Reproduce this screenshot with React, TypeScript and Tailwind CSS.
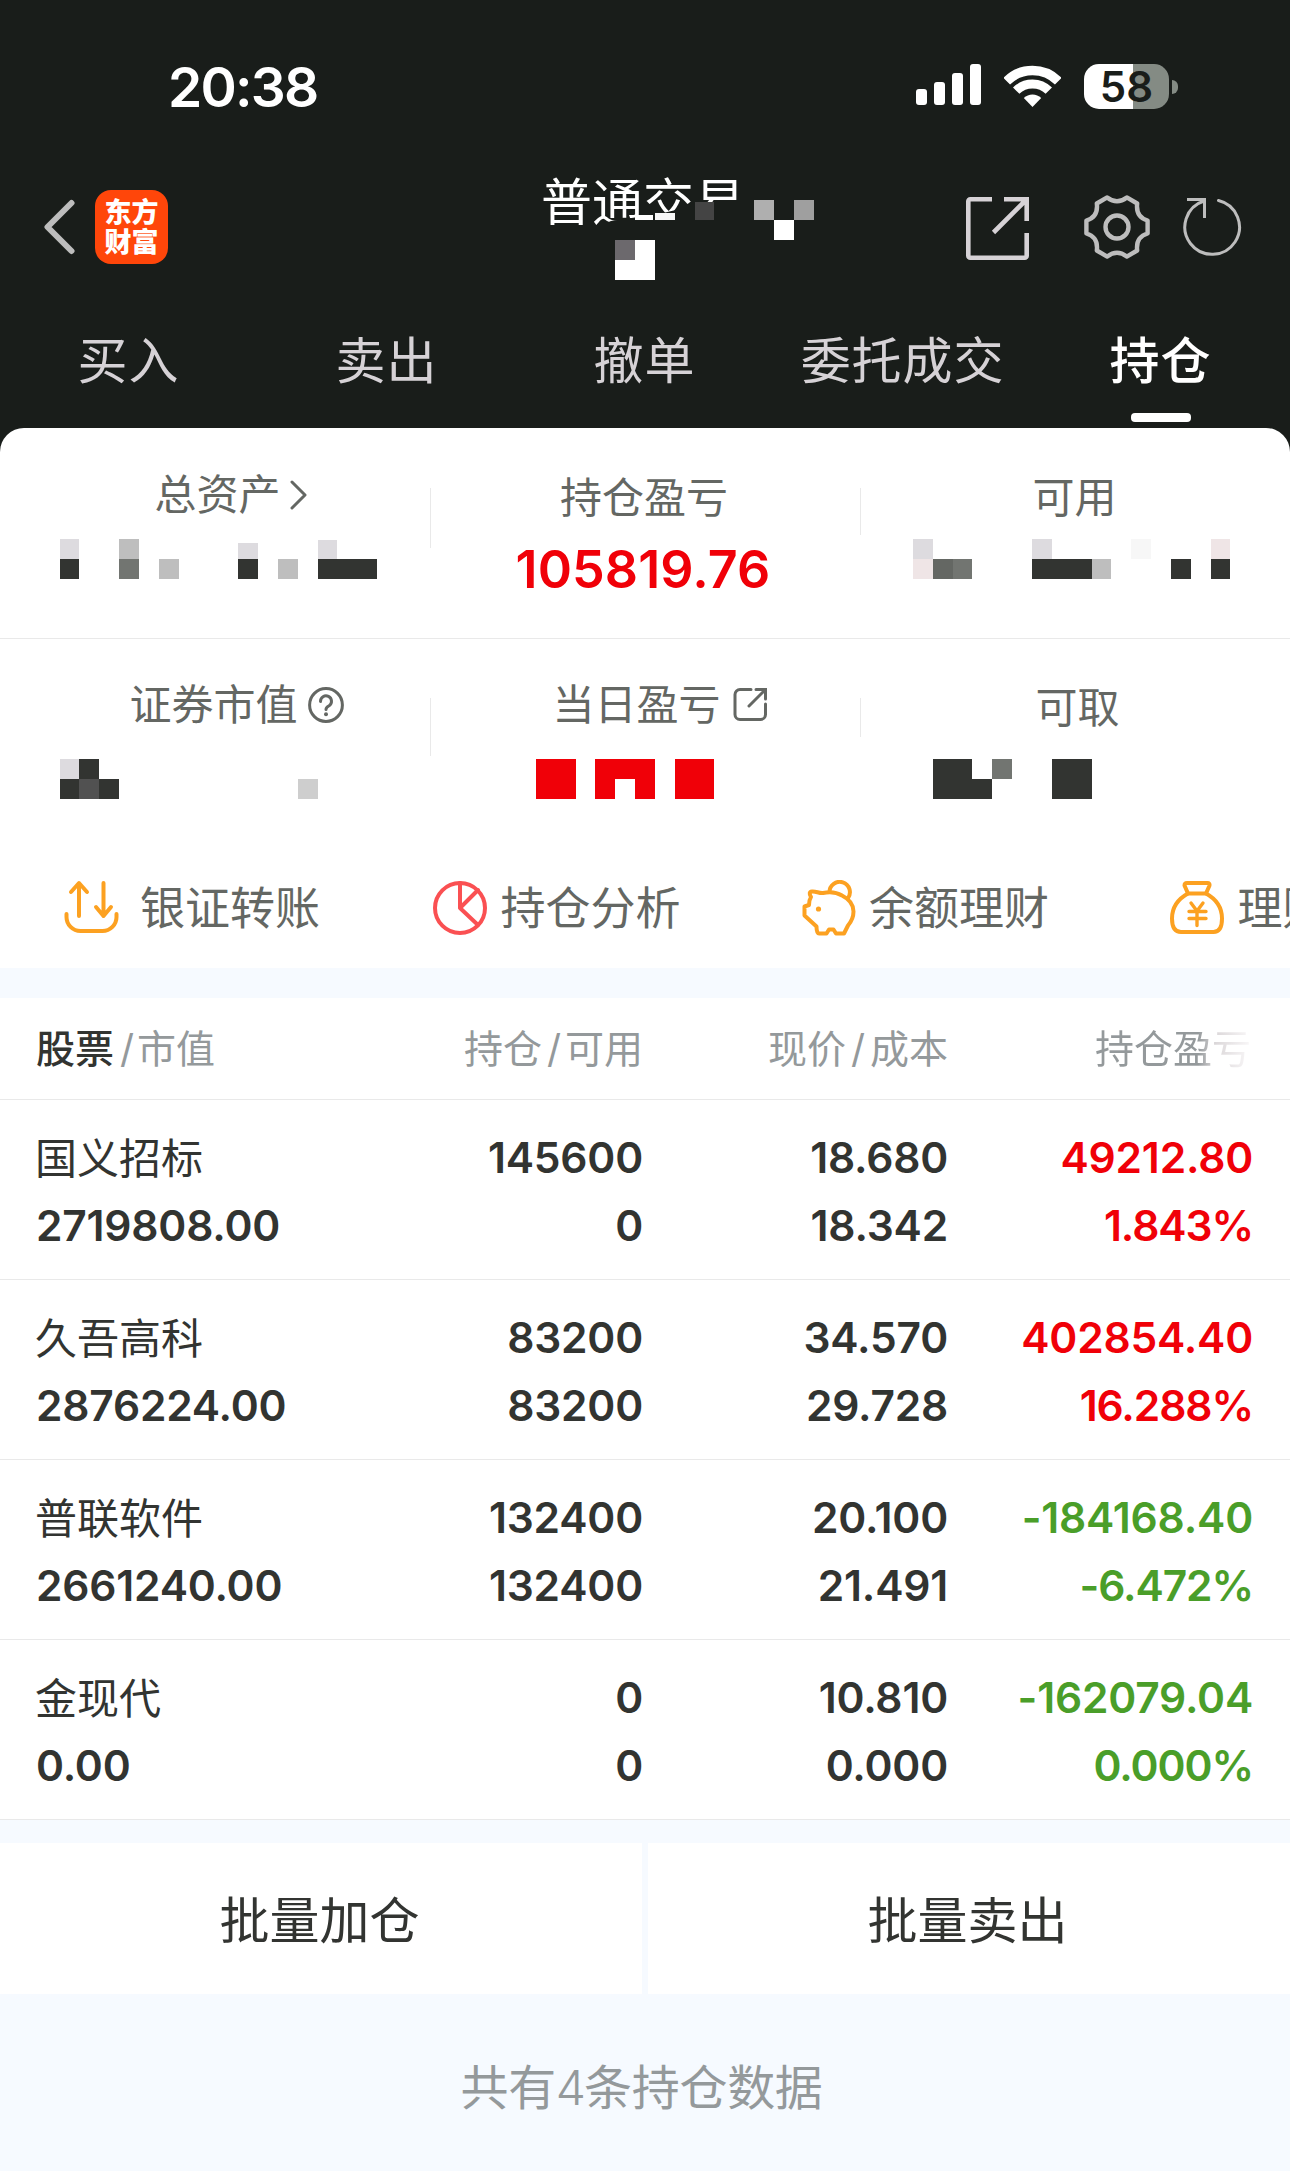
import type { ReactNode } from "react";

type Cell = [x: number, y: number, w: number, h: number, fill: string];

interface MosaicProps {
    width: number;
    height: number;
    cells: Cell[];
    className?: string;
}

function Mosaic({ width, height, cells, className }: MosaicProps) {
    return (
        <svg
            width={width}
            height={height}
            viewBox={`0 0 ${width} ${height}`}
            shapeRendering="crispEdges"
            className={className}
            aria-hidden="true"
        >
            {cells.map(([x, y, w, h, fill]) => (
                <rect key={`${x}-${y}`} x={x} y={y} width={w} height={h} fill={fill} />
            ))}
        </svg>
    );
}

const DARK = "#323431";
const PALE = "#dddbdf";
const RED = "#f00008";

const titleMask: Cell[] = [
    [117, 55, 18, 5, "#ffffff"],
    [137, 53, 20, 7, "#f7f7f7"],
    [177, 42, 19, 18, "#444444"],
    [236, 40, 20, 20, "#afafaf"],
    [276, 40, 20, 20, "#9f9f9f"],
    [256, 60, 20, 20, "#ffffff"],
    [97, 80, 20, 20, "#6c696d"],
    [117, 80, 20, 20, "#ffffff"],
    [97, 100, 40, 20, "#ffffff"],
];

const assetsMask: Cell[] = [
    [60, 0, 19, 20, PALE],
    [60, 20, 19, 20, DARK],
    [119, 0, 20, 20, "#bebebe"],
    [119, 20, 20, 20, "#727571"],
    [159, 20, 20, 20, "#bebebe"],
    [238, 4, 20, 16, PALE],
    [238, 20, 20, 20, DARK],
    [278, 20, 20, 20, "#bebebe"],
    [318, 1, 19, 19, PALE],
    [318, 20, 59, 20, DARK],
];

const availableMask: Cell[] = [
    [52, 0, 20, 20, PALE],
    [52, 20, 20, 20, "#efe5e6"],
    [72, 20, 20, 20, "#646763"],
    [92, 20, 19, 20, "#727571"],
    [171, 0, 20, 20, PALE],
    [171, 20, 60, 20, DARK],
    [231, 20, 19, 20, "#bebebe"],
    [270, 0, 20, 20, "#f7f7f7"],
    [310, 20, 20, 20, DARK],
    [350, 0, 19, 20, "#efe5e6"],
    [350, 20, 19, 20, DARK],
];

const marketMask: Cell[] = [
    [60, 0, 19, 20, PALE],
    [79, 0, 20, 20, DARK],
    [60, 20, 19, 20, DARK],
    [79, 20, 20, 20, "#515151"],
    [99, 20, 20, 20, DARK],
    [298, 20, 20, 20, "#cecece"],
];

const todayMask: Cell[] = [
    [105, 0, 40, 40, RED],
    [164, 0, 60, 20, RED],
    [164, 20, 20, 20, RED],
    [204, 20, 20, 20, RED],
    [244, 0, 39, 40, RED],
];

const withdrawMask: Cell[] = [
    [72, 0, 39, 40, DARK],
    [111, 20, 20, 20, DARK],
    [131, 0, 20, 20, "#727571"],
    [191, 0, 40, 40, DARK],
];

function StatusBar() {
    return (
        <div className="flex h-[162px] items-start pl-[168px] pt-[54px] text-white">
            <span className="w-[748px] text-[55px] leading-[66px] font-semibold tracking-[-1.8px]">
                20:38
            </span>
            <svg width="65" height="41" viewBox="0 0 65 41" fill="currentColor" className="mt-[10px]">
                <rect x="0" y="25" width="11" height="16" rx="3" />
                <rect x="18" y="18" width="11" height="23" rx="3" />
                <rect x="36" y="9" width="11" height="32" rx="3" />
                <rect x="54" y="0" width="11" height="41" rx="3" />
            </svg>
            <svg width="57" height="43" viewBox="0 0 57 43" fill="none" className="mt-[11px] ml-[23px]">
                <path d="M2.7 16.2a36.5 36.5 0 0 1 51.6 0" stroke="currentColor" strokeWidth="9.5" />
                <path d="M12.2 25.7a23 23 0 0 1 32.6 0" stroke="currentColor" strokeWidth="9" />
                <path d="M28.5 42l-8.7-8.9a12.5 12.5 0 0 1 17.4 0z" fill="currentColor" />
            </svg>
            <div className="mt-[10px] ml-[23px] flex h-[45px] w-[85px] items-center justify-center rounded-[15px] bg-[linear-gradient(90deg,#fff_49px,#848b84_49px)] text-[42px] leading-[45px] font-semibold text-[#191d1a]">
                58
            </div>
            <div className="mt-[26px] ml-[3px] h-[14px] w-[6px] rounded-r-full bg-[#848b84]" />
        </div>
    );
}

function NavBar() {
    return (
        <div className="flex h-[130px] items-start">
            <svg width="32" height="56" viewBox="0 0 32 56" fill="none" className="mt-[37px] ml-[43px]">
                <path d="M28.5 4L4.5 28l24 24" stroke="#bdbdbd" strokeWidth="6" strokeLinecap="round" strokeLinejoin="round" />
            </svg>
            <div className="mt-[28px] ml-[20px] flex h-[74px] w-[73px] flex-col items-center justify-center rounded-[16px] bg-[#ff460a] pt-[1px] text-[27px] leading-[30px] font-black text-white">
                <span>东方</span>
                <span>财富</span>
            </div>
            <div className="relative mt-[-2px] ml-[350px] h-[130px] w-[400px] pl-[23px]">
                <h1 className="pt-[8px] text-[51px] leading-[70px] font-normal text-white [clip-path:polygon(0_0,100%_0,100%_40px,168px_42px,118px_54px,70px_61px,58px_66px,58px_90px,0_90px)]">
                    普通交易
                </h1>
                <Mosaic width={320} height={122} cells={titleMask} className="absolute top-0 left-0" />
            </div>
            <svg width="63" height="63" viewBox="0 0 63 63" fill="none" stroke="#d6d2d6" strokeWidth="4.6" className="mt-[35px] ml-[48px]">
                <path d="M26 2.3H4.3a2 2 0 0 0-2 2v54.4a2 2 0 0 0 2 2h54.4a2 2 0 0 0 2-2V36" />
                <path d="M38 2.3h22.7V24M60 3L27.500 35.500" />
            </svg>
            <svg width="68" height="68" viewBox="-34 -34 68 68" fill="none" stroke="#bdbdbd" strokeWidth="4.4" className="mt-[31px] ml-[54px]">
                <path
                    d="M-9.800-29.600Q0-22 9.800-29.600L20.200-23.500Q18.500-10 30.600-6.500V6.500Q18.500 10 20.200 23.500L9.800 29.600Q0 22-9.800 29.600L-20.200 23.500Q-18.500 10-30.600 6.500V-6.500Q-18.500-10-20.200-23.500Z"
                    strokeLinejoin="round"
                />
                <circle r="11.500" />
            </svg>
            <svg width="60" height="60" viewBox="-30 -30 60 60" fill="none" stroke="#bdbdbd" strokeWidth="3" className="mt-[35px] ml-[31px]">
                <path d="M6.500-26.500A27.300 27.300 0 1 1-8-26" strokeLinecap="round" />
                <path d="M-25-27.500H-7.500V-9" />
            </svg>
        </div>
    );
}

const tabs = ["买入", "卖出", "撤单", "委托成交", "持仓"];

function Tabs({ active }: { active: string }) {
    return (
        <nav className="grid h-[136px] grid-cols-5 text-[50px] leading-[70px] tracking-[0.9px] text-[#d6d2d6]">
            {tabs.map((tab) => (
                <div key={tab} className="flex flex-col items-center pt-[34px]">
                    <span className={tab === active ? "pr-[1px] font-medium text-white" : "pr-[1px] font-normal"}>{tab}</span>
                    {tab === active && <div className="mt-[17px] h-[9px] w-[60px] rounded-[4px] bg-white" />}
                </div>
            ))}
        </nav>
    );
}

interface StatProps {
    label: string;
    icon?: ReactNode;
    labelClass?: string;
    dividerClass?: string;
    children: ReactNode;
}

function Stat({ label, icon, labelClass, dividerClass, children }: StatProps) {
    return (
        <div className="relative h-full">
            <div className={`flex h-[60px] items-center justify-center text-[42px] leading-[60px] text-[#646763] ${labelClass ?? ""}`}>
                <span className="pt-[2px]">{label}</span>
                {icon}
            </div>
            {children}
            {dividerClass && <div className={`absolute right-0 w-px bg-[#e9e9e9] ${dividerClass}`} />}
        </div>
    );
}

function ChevronIcon() {
    return (
        <svg width="18" height="30" viewBox="0 0 18 30" fill="none" stroke="#646763" strokeWidth="3" className="mt-[2px] ml-[9px]">
            <path d="M2 2l13 13L2 28" strokeLinecap="round" strokeLinejoin="round" />
        </svg>
    );
}

function HelpIcon() {
    return (
        <svg width="36" height="36" viewBox="0 0 36 36" fill="none" stroke="#646763" strokeWidth="3" className="mt-[2px] ml-[10px]">
            <circle cx="18" cy="18" r="16.400" />
            <path d="M12.500 14.500a5.500 5.500 0 1 1 8.600 4.300q-3.100 1.700-3.100 3.700" strokeLinecap="round" />
            <circle cx="18" cy="27.300" r="2" fill="#646763" stroke="none" />
        </svg>
    );
}

function OpenIcon() {
    return (
        <svg width="35" height="35" viewBox="0 0 35 35" fill="none" stroke="#646763" strokeWidth="3" className="mt-[1px] ml-[12px]">
            <path d="M18 2.500H7a5 5 0 0 0-5 5V27.500a5 5 0 0 0 5 5H27.500a5 5 0 0 0 5-5V17" strokeLinecap="round" />
            <path d="M23 2.500h9.500V12M32 3L16 19" strokeLinecap="round" />
        </svg>
    );
}

function Summary() {
    return (
        <section>
            <div className="grid h-[211px] grid-cols-[431px_430px_429px] border-b border-[#e9e9e9] pt-[36px]">
                <Stat label="总资产" icon={<ChevronIcon />} labelClass="pl-[31px]" dividerClass="top-[24px] h-[60px]">
                    <Mosaic width={431} height={40} cells={assetsMask} className="mt-[15px]" />
                </Stat>
                <Stat label="持仓盈亏" labelClass="pt-[6px] pr-[4px]" dividerClass="top-[24px] h-[47px]">
                    <div className="mt-[15px] pr-[6px] text-center text-[52px] leading-[62px] font-[560] tracking-[0.1px] text-[#f00008]">
                        105819.76
                    </div>
                </Stat>
                <Stat label="可用" labelClass="pt-[6px] pr-[2px]">
                    <Mosaic width={429} height={40} cells={availableMask} className="mt-[15px]" />
                </Stat>
            </div>
            <div className="grid h-[207px] grid-cols-[431px_430px_429px] pt-[35px]">
                <Stat label="证券市值" icon={<HelpIcon />} labelClass="pl-[42px]" dividerClass="top-[24px] h-[58px]">
                    <Mosaic width={431} height={40} cells={marketMask} className="mt-[25px]" />
                </Stat>
                <Stat label="当日盈亏" icon={<OpenIcon />} labelClass="pl-[28px]" dividerClass="top-[24px] h-[39px]">
                    <Mosaic width={430} height={40} cells={todayMask} className="mt-[25px]" />
                </Stat>
                <Stat label="可取" labelClass="pt-[5px] pl-[4px]">
                    <Mosaic width={429} height={40} cells={withdrawMask} className="mt-[25px]" />
                </Stat>
            </div>
        </section>
    );
}

interface ActionProps {
    label: string;
    labelClass: string;
    color: string;
    children: ReactNode;
}

function Action({ label, labelClass, color, children }: ActionProps) {
    return (
        <div className="flex w-[368.500px] shrink-0 items-center">
            <svg width="55" height="56" viewBox="0 0 55 56" fill="none" stroke={color} strokeWidth="4" strokeLinecap="round" strokeLinejoin="round">
                {children}
            </svg>
            <span className={`pt-[2px] whitespace-nowrap text-[45px] leading-[64px] text-[#646763] ${labelClass}`}>{label}</span>
        </div>
    );
}

function QuickActions() {
    return (
        <div className="flex h-[122px] overflow-hidden pt-[2px] pl-[64px]">
            <Action label="银证转账" labelClass="pl-[21px]" color="#fca121">
                <path d="M15 36V4M7 12l8-9 8 9M39.500 3v33M32 27l7.500 9 7.500-9" />
                <path d="M2.500 34v3a14 14 0 0 0 14 14h22a14 14 0 0 0 14-14v-3" />
            </Action>
            <Action label="持仓分析" labelClass="pl-[13px]" color="#fa5052">
                <circle cx="27" cy="28" r="25" />
                <path d="M27 3v25l18-18M27 28l18 17" />
            </Action>
            <Action label="余额理财" labelClass="pl-[13px]" color="#fca121">
                <path d="M10 17Q7 12 11 11.500C15 11 18 13.500 22 13c7-1.500 14-0.500 19 2.500C48 19 52.500 25 52.500 31.500S50 42 47 45.500L43 53.500H35L32.500 49.500H28L25.500 53.500H18q-2.500 0-2.500-7L3.500 35.500V26.500L8 25q0-5 2-8Z" />
                <path d="M28.500 12a10.200 10.200 0 1 1 18.500 6" />
                <circle cx="17.500" cy="29" r="2.600" fill={color_orange} stroke="none" />
            </Action>
            <Action label="理财" labelClass="pl-[13px]" color="#fca121">
                <path d="M17 3h20.500q2.500 0 2 2.500L36 13.500H18L14.500 5.500Q14.500 3 17 3z" />
                <path d="M18 13.500C8 19 2 28 2 38.500q0 13.500 9 13.500h32.500q8.500 0 8.500-13.500c0-10.500-6-19.500-16-25" />
                <path d="M21 23l6 8 6-8M19 31.500h17M19 38.500h17M27 31v14.500" strokeWidth="3.400" />
            </Action>
        </div>
    );
}

const color_orange = "#fca121";

interface Holding {
    name: string;
    value: string;
    held: string;
    available: string;
    price: string;
    cost: string;
    profit: string;
    rate: string;
    up: boolean;
}

const holdings: Holding[] = [
    { name: "国义招标", value: "2719808.00", held: "145600", available: "0", price: "18.680", cost: "18.342", profit: "49212.80", rate: "1.843%", up: true },
    { name: "久吾高科", value: "2876224.00", held: "83200", available: "83200", price: "34.570", cost: "29.728", profit: "402854.40", rate: "16.288%", up: true },
    { name: "普联软件", value: "2661240.00", held: "132400", available: "132400", price: "20.100", cost: "21.491", profit: "-184168.40", rate: "-6.472%", up: false },
    { name: "金现代", value: "0.00", held: "0", available: "0", price: "10.810", cost: "0.000", profit: "-162079.04", rate: "0.000%", up: false },
];

function HoldingRow({ item }: { item: Holding }) {
    return (
        <div className="grid h-[180px] grid-cols-[307px_300px_305px_305px] content-start border-b border-[#e9e9e9] pt-[24px] pl-[36px] text-[42.500px] leading-[68px] font-[560] tracking-[-0.2px] text-[#323431]">
            <span className="relative top-[1px] left-[-1px] text-[42px] font-normal tracking-normal">{item.name}</span>
            <span className="text-right">{item.held}</span>
            <span className="text-right">{item.price}</span>
            <span className={`text-right ${item.up ? "text-[#f00008]" : "text-[#4a9e29]"}`}>{item.profit}</span>
            <span>{item.value}</span>
            <span className="text-right">{item.available}</span>
            <span className="text-right">{item.cost}</span>
            <span className={`text-right tracking-[-1.1px] ${item.up ? "text-[#f00008]" : "text-[#4a9e29]"}`}>{item.rate}</span>
        </div>
    );
}

function Holdings() {
    return (
        <section className="bg-white">
            <div className="grid h-[102px] grid-cols-[307px_300px_305px_305px] border-b border-[#e9e9e9] pt-[21px] pl-[36px] text-[39px] leading-[60px] text-[#94999b]">
                <span>
                    <span className="font-medium text-[#323431]">股票</span>
                    <span className="pr-[3px] pl-[6px]">/</span>市值
                </span>
                <span className="text-right">持仓<span className="pr-[4px] pl-[5px]">/</span>可用</span>
                <span className="text-right">现价<span className="px-[5px]">/</span>成本</span>
                <span className="bg-[linear-gradient(90deg,#94999b_250px,#dcd8da_268px,#f7f5f6_300px)] bg-clip-text pr-[2px] text-right text-transparent">
                    持仓盈亏
                </span>
            </div>
            {holdings.map((item) => (
                <HoldingRow key={item.name} item={item} />
            ))}
        </section>
    );
}

export default function App() {
    return (
        <div className="h-[2171px] w-[1290px] overflow-hidden bg-[#f6faff] font-[Inter,'Noto_Sans_CJK_SC',sans-serif]">
            <header className="bg-[#191d1a]">
                <StatusBar />
                <NavBar />
                <Tabs active="持仓" />
                <div className="rounded-t-[24px] bg-white">
                    <Summary />
                    <QuickActions />
                </div>
            </header>
            <main className="pt-[30px]">
                <Holdings />
                <div className="mt-[23px] grid h-[151px] grid-cols-2 gap-[6px] text-[50px] leading-[70px] text-[#323431]">
                    <button className="bg-white pt-[4px] pr-[3px]">批量加仓</button>
                    <button className="bg-white pt-[4px] pr-[3px]">批量卖出</button>
                </div>
                <p className="pt-[59px] pr-[7px] text-center text-[48px] leading-[70px] tracking-[-0.3px] text-[#94999b]">
                    共有<span className="font-light tracking-[-2px]">4</span>条持仓数据
                </p>
            </main>
        </div>
    );
}
